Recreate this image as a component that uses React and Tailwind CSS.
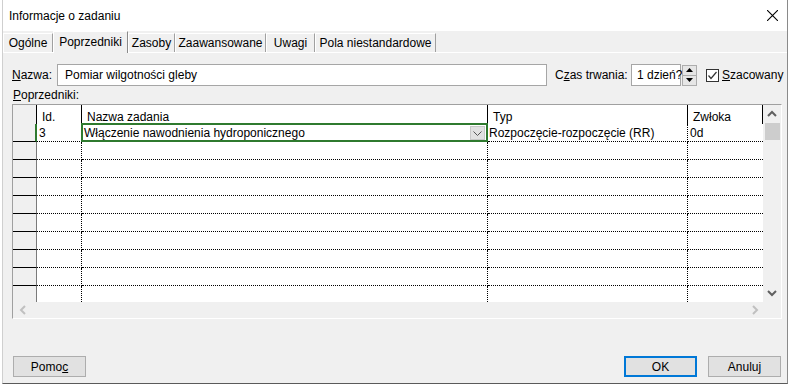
import React from 'react';

const font = "font-['Liberation_Sans','Arial',sans-serif]";

const Chevron = ({ dir = 'down', color = '#606060' }) => {
  const pts = {
    up: '1,6 5,2 9,6',
    down: '1,2 5,6 9,2',
    left: '6,1 2,5 6,9',
    right: '2,1 6,5 2,9',
  }[dir];
  const vb = dir === 'up' || dir === 'down' ? '0 0 10 8' : '0 0 8 10';
  const size = dir === 'up' || dir === 'down' ? 'w-[10px] h-[8px]' : 'w-[8px] h-[10px]';
  return (
    <svg viewBox={vb} className={size}>
      <polyline points={pts} fill="none" stroke={color} strokeWidth="2" />
    </svg>
  );
};

const tabs = [
  { label: 'Ogólne', w: 'w-[50px]' },
  { label: 'Poprzedniki', w: 'w-[75px]', active: true },
  { label: 'Zasoby', w: 'w-[47px]' },
  { label: 'Zaawansowane', w: 'w-[91px]' },
  { label: 'Uwagi', w: 'w-[49px]' },
  { label: 'Pola niestandardowe', w: 'w-[121px]' },
];

const App = () => {
  const rows = Array.from({ length: 10 });

  return (
    <div className={`w-[789px] h-[386px] bg-white overflow-hidden text-[12px] text-black ${font}`}>
      <div className="ml-[2px] w-[786px] h-[384px] border-l border-r border-b border-l-[#cfcfcf] border-r-[#8a8a8a] border-b-[#5a5a5a] flex flex-col bg-[#f0f0f0]">
        {/* Title bar */}
        <div className="h-[31px] bg-white flex items-center justify-between pl-[6px] pr-[9px] shrink-0">
          <span className="text-[12px]">Informacje o zadaniu</span>
          <svg viewBox="0 0 10 10" className="w-[11px] h-[11px]">
            <path d="M0 0 L10 10 M10 0 L0 10" stroke="#000" strokeWidth="1" />
          </svg>
        </div>

        {/* Tabs */}
        <div className="h-[21px] flex items-end shrink-0">
          {tabs.map((t) =>
            t.active ? (
              <div
                key={t.label}
                className={`${t.w} h-[22px] -mb-[1px] relative z-10 bg-[#f0f0f0] border-t border-l border-r border-t-white border-l-white border-r-[#8a8a8a] flex items-center justify-center pb-[2px] whitespace-nowrap`}
              >
                {t.label}
              </div>
            ) : (
              <div
                key={t.label}
                className={`${t.w} h-[19px] bg-[#f0f0f0] border-t border-l border-r border-t-white border-l-white border-r-[#a0a0a0] flex items-center justify-center whitespace-nowrap`}
              >
                {t.label}
              </div>
            )
          )}
        </div>

        {/* Panel */}
        <div className="flex-1 border-t border-white flex flex-col pl-[9px] pr-[5px]">
          {/* Nazwa row */}
          <div className="mt-[11px] h-[22px] flex items-center whitespace-nowrap">
            <span className="w-[45px] shrink-0">
              <span className="underline">N</span>azwa:
            </span>
            <div className="w-[490px] shrink-0 h-[22px] bg-white border border-[#a6a6a6] flex items-center pl-[7px]">
              Pomiar wilgotności gleby
            </div>
            <span className="ml-[8px] w-[76px] shrink-0">
              C<span className="underline">z</span>as trwania:
            </span>
            <div className="w-[50px] shrink-0 h-[22px] bg-white border border-[#a6a6a6] flex items-center pl-[5px]">
              1 dzień?
            </div>
            <div className="ml-[1px] shrink-0 w-[15px] h-[21px] border border-[#adadad] bg-[#e6e6e6] flex flex-col">
              <div className="flex-1 flex items-center justify-center border-b border-[#adadad]">
                <svg viewBox="0 0 7 4" className="w-[7px] h-[4px]">
                  <polygon points="0,4 3.5,0 7,4" fill="#000" />
                </svg>
              </div>
              <div className="flex-1 flex items-center justify-center">
                <svg viewBox="0 0 7 4" className="w-[7px] h-[4px]">
                  <polygon points="0,0 3.5,4 7,0" fill="#000" />
                </svg>
              </div>
            </div>
            <div className="ml-[9px] shrink-0 w-[13px] h-[13px] bg-white border border-[#333] flex items-center justify-center">
              <svg viewBox="0 0 11 11" className="w-[11px] h-[11px]">
                <polyline points="1.5,5.5 4,8.5 9.5,2" fill="none" stroke="#333" strokeWidth="1.2" />
              </svg>
            </div>
            <span className="ml-[3px] shrink-0">
              <span className="underline">S</span>zacowany
            </span>
          </div>

          {/* Poprzedniki label */}
          <div className="h-[18px] flex items-center pl-[1px]">
            <span>
              <span className="underline">P</span>oprzedniki:
            </span>
          </div>

          {/* Grid */}
          <div className="w-[770px] border border-t-[#a0a0a0] border-l-[#a0a0a0] border-r-white border-b-white flex flex-col">
            <div className="flex h-[197px]">
              <div className="w-[750px] flex flex-col overflow-hidden">
                {/* Header */}
                <div className="flex h-[19px] shrink-0 bg-white">
                  <div className="w-[24px] bg-[#f0f0f0] border-r border-black" />
                  <div className="w-[45px] border-r border-black pl-[5px] pt-[3px]">Id.</div>
                  <div className="w-[406px] border-r border-black pl-[5px] pt-[3px]">Nazwa zadania</div>
                  <div className="w-[200px] border-r border-black pl-[5px] pt-[3px]">Typ</div>
                  <div className="w-[75px] border-r border-black pl-[5px] pt-[3px]">Zwłoka</div>
                </div>
                {/* Rows */}
                {rows.map((_, i) => (
                  <div key={i} className="flex h-[18px] shrink-0 bg-white">
                    <div
                      className={`w-[24px] bg-[#f0f0f0] border-b border-black border-r ${
                        i === 0 ? 'border-r-2 border-r-[#2f7a2f]' : 'border-r-[#7a7a7a]'
                      }`}
                    />
                    <div className="w-[45px] border-r border-b border-dotted border-black pl-[2px] flex items-center">
                      {i === 0 ? '3' : ''}
                    </div>
                    <div className="w-[406px] border-r border-b border-dotted border-black relative flex items-center pl-[2px]">
                      {i === 0 && (
                        <>
                          <span>Włączenie nawodnienia hydroponicznego</span>
                          <div className="absolute -left-[1px] -top-[1px] -right-[1px] -bottom-[1px] border-2 border-[#2f7a2f]">
                            <div className="absolute right-[1px] top-[1px] w-[15px] h-[14px] bg-[#e1e1e1] border border-[#c8c8c8] flex items-center justify-center">
                              <svg viewBox="0 0 9 5" className="w-[9px] h-[5px]">
                                <polyline points="0.5,0.5 4.5,4.5 8.5,0.5" fill="none" stroke="#555" strokeWidth="1" />
                              </svg>
                            </div>
                          </div>
                        </>
                      )}
                    </div>
                    <div className="w-[200px] border-r border-b border-dotted border-black pl-[1px] flex items-center">
                      {i === 0 ? 'Rozpoczęcie-rozpoczęcie (RR)' : ''}
                    </div>
                    <div className="w-[75px] border-b border-dotted border-black pl-[2px] flex items-center">
                      {i === 0 ? '0d' : ''}
                    </div>
                  </div>
                ))}
              </div>
              {/* Vertical scrollbar */}
              <div className="w-[18px] bg-[#f0f0f0] flex flex-col items-center">
                <div className="h-[18px] flex items-center justify-center">
                  <Chevron dir="up" />
                </div>
                <div className="w-[15px] h-[17px] bg-[#cdcdcd]" />
                <div className="flex-1" />
                <div className="h-[18px] flex items-center justify-center">
                  <Chevron dir="down" />
                </div>
              </div>
            </div>
            {/* Horizontal scrollbar */}
            <div className="h-[16px] bg-[#f0f0f0] flex items-center justify-between pl-[6px] pr-[22px]">
              <Chevron dir="left" color="#c0c0c0" />
              <Chevron dir="right" color="#c0c0c0" />
            </div>
          </div>

          <div className="flex-1" />

          {/* Buttons */}
          <div className="h-[21px] mb-[6px] flex items-center">
            <button className="ml-[1px] w-[73px] h-[21px] bg-[#e1e1e1] border border-[#adadad] flex items-center justify-center">
              <span>
                Pomo<span className="underline">c</span>
              </span>
            </button>
            <div className="flex-1" />
            <button className="w-[73px] h-[21px] bg-[#e1e1e1] border-2 border-[#0078d7] flex items-center justify-center">
              OK
            </button>
            <button className="ml-[11px] mr-[1px] w-[73px] h-[21px] bg-[#e1e1e1] border border-[#adadad] flex items-center justify-center">
              Anuluj
            </button>
          </div>
        </div>
      </div>
    </div>
  );
};

export default App;
